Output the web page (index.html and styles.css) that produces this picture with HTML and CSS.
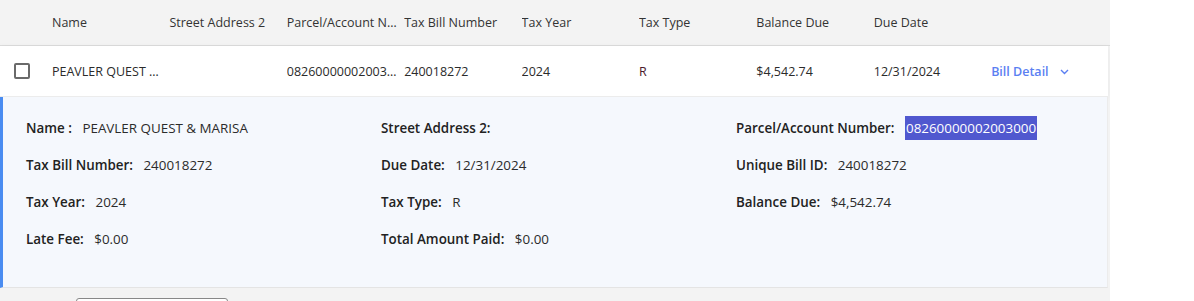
FILE: index.html
```html
<!DOCTYPE html>
<html lang="en">
<head>
  <meta charset="UTF-8" />
  <title>Tax Bills</title>
  <link rel="stylesheet" href="styles.css">
</head>
<body>
  <div class="bills">
    <div class="grid head">
      <div class="cell"></div>
      <div class="cell">Name</div>
      <div class="cell">Street Address 2</div>
      <div class="cell">Parcel/Account Number</div>
      <div class="cell">Tax Bill Number</div>
      <div class="cell">Tax Year</div>
      <div class="cell">Tax Type</div>
      <div class="cell">Balance Due</div>
      <div class="cell">Due Date</div>
      <div class="cell"></div>
    </div>

    <div class="grid row">
      <div class="cell"><span class="check"></span></div>
      <div class="cell name">PEAVLER QUEST &amp; MARISA</div>
      <div class="cell"></div>
      <div class="cell">08260000002003000</div>
      <div class="cell">240018272</div>
      <div class="cell">2024</div>
      <div class="cell type">R</div>
      <div class="cell">$4,542.74</div>
      <div class="cell">12/31/2024</div>
      <div class="cell"><a class="detail-link" href="#">Bill Detail <span class="chev"><svg width="9" height="6" viewBox="0 0 9 6"><path d="M1 1 L4.5 4.5 L8 1" fill="none" stroke="currentColor" stroke-width="1.4"/></svg></span></a></div>
    </div>

    <div class="detail">
      <div class="field"><b>Name :</b> <span>PEAVLER QUEST &amp; MARISA</span></div>
      <div class="field"><b>Street Address 2:</b></div>
      <div class="field"><b>Parcel/Account Number:</b> <span class="sel">08260000002003000</span></div>

      <div class="field"><b>Tax Bill Number:</b> <span>240018272</span></div>
      <div class="field"><b>Due Date:</b> <span>12/31/2024</span></div>
      <div class="field"><b>Unique Bill ID:</b> <span>240018272</span></div>

      <div class="field"><b>Tax Year:</b> <span>2024</span></div>
      <div class="field"><b>Tax Type:</b> <span>R</span></div>
      <div class="field"><b>Balance Due:</b> <span>$4,542.74</span></div>

      <div class="field"><b>Late Fee:</b> <span>$0.00</span></div>
      <div class="field"><b>Total Amount Paid:</b> <span>$0.00</span></div>
      <div class="field"></div>
    </div>

    <div class="footer">
      <div class="pager"></div>
    </div>
  </div>
</body>
</html>
```

FILE: styles.css
```css
body {
  margin: 0;
  background: white;
  font-family: "Open Sans", "Noto Sans", sans-serif;
  font-size: 12.5px;
  color: #2b2b2b;
}

.bills {
  width: 1110px;
  background: #f3f3f3;
  height: 301px;
  overflow: hidden;
}

.grid {
  display: grid;
  grid-template-columns: 52px repeat(8, 117.4px) 1fr;
  align-items: center;
}

.cell {
  white-space: nowrap;
  overflow: hidden;
  text-overflow: ellipsis;
  padding-right: 3px;
}

.head {
  height: 45px;
  border-bottom: 1px solid #dcdcdc;
  color: #333;
}

.row {
  height: 50px;
  background: white;
  border-bottom: 1px solid #ececec;
  margin-right: 2px;
  box-shadow: 0 1px 6px rgba(0, 0, 0, 0.05);
}

.row .name {
  padding-right: 0;
  max-width: 110px;
}

.row .type {
  color: #4a1a2c;
}

.check {
  display: block;
  width: 12px;
  height: 12px;
  margin-left: 14px;
  border: 2px solid #6a6a6a;
  border-radius: 2px;
}

.detail-link {
  color: #5b7ff2;
  text-decoration: none;
  font-weight: 600;
}

.chev {
  display: inline-block;
  margin-left: 8px;
  vertical-align: 1px;
}

.detail {
  display: grid;
  grid-template-columns: 355px 355px 1fr;
  grid-auto-rows: 37px;
  align-items: center;
  padding: 12px 0 30px 23px;
  margin-right: 2px;
  height: 148px;
  font-size: 13.4px;
  background: #f5f8fd;
  border-left: 3px solid #4a8cf1;
  border-bottom: 1px solid #e4e4e4;
  border-right: 1px solid #ececec;
}

.field b {
  font-weight: 600;
  color: #222;
  margin-right: 7px;
}

.sel {
  background: #5058cf;
  color: white;
  padding: 3px 1px;
}

.footer {
  height: 12px;
  padding: 10px 0 0 76px;
}

.pager {
  width: 150px;
  height: 20px;
  border: 1px solid #888;
  border-radius: 3px;
  background: white;
}
```
